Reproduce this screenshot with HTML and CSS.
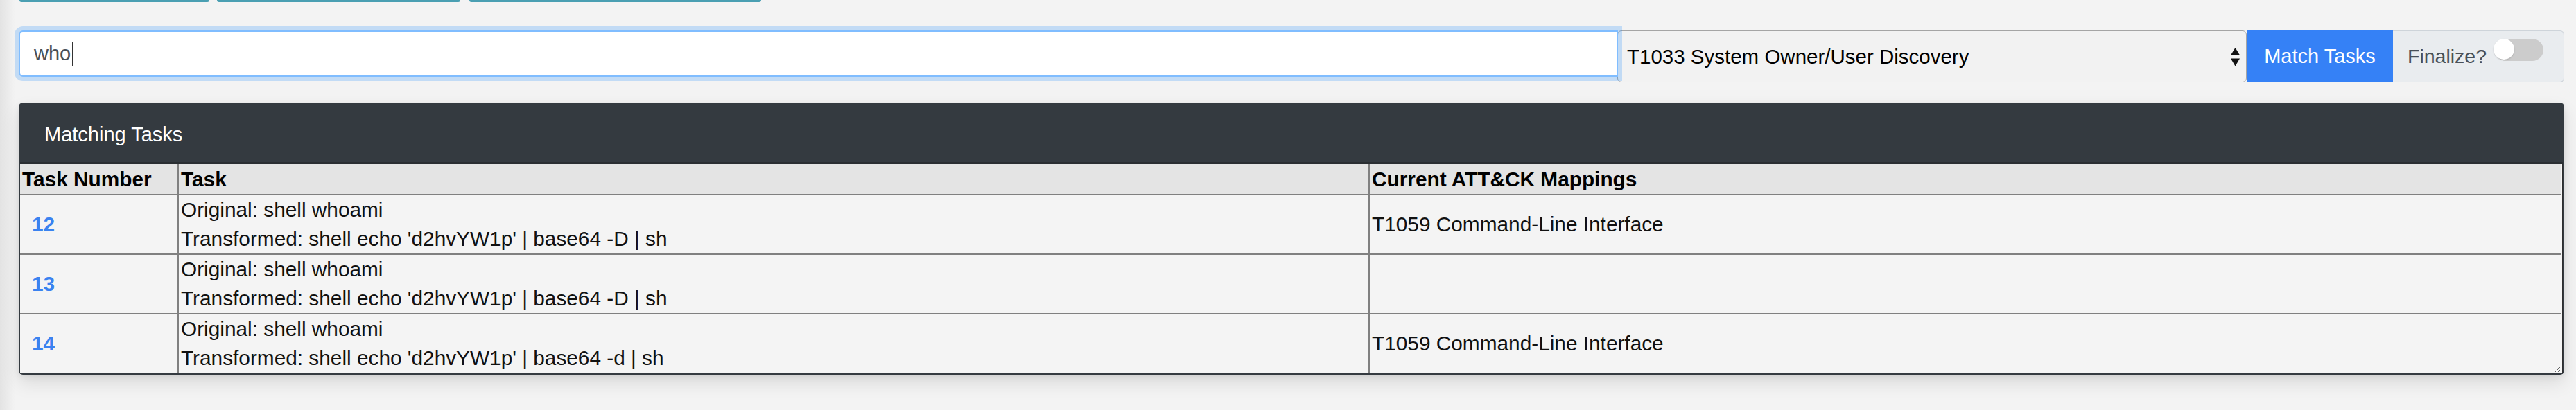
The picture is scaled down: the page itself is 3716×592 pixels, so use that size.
FILE: index.html
```html
<!DOCTYPE html>
<html lang="en">
<head>
<meta charset="utf-8">
<title>Matching Tasks</title>
<link rel="stylesheet" href="styles.css">
</head>
<body>
  <div class="tabs">
    <span class="tab tab-1"></span>
    <span class="tab tab-2"></span>
    <span class="tab tab-3"></span>
  </div>

  <div class="search-row">
    <div class="search-input"><span class="typed">who</span><span class="caret"></span></div>
    <div class="select">
      <span>T1033 System Owner/User Discovery</span>
      <svg class="select-arrows" width="13" height="27" viewBox="0 0 13 27" aria-hidden="true">
        <path d="M0 10.5 L6.5 0 L13 10.5 Z" fill="#111"/>
        <path d="M0 15.5 L13 15.5 L6.5 26.5 Z" fill="#111"/>
      </svg>
    </div>
    <button class="btn-match" type="button">Match Tasks</button>
    <div class="finalize">
      <span class="finalize-label">Finalize?</span>
      <span class="switch"><span class="knob"></span></span>
    </div>
  </div>

  <div class="card">
    <div class="card-header">Matching Tasks</div>
    <div class="table-wrap">
      <table class="tasks">
        <colgroup>
          <col class="col-num">
          <col class="col-task">
          <col>
        </colgroup>
        <thead>
          <tr>
            <th>Task Number</th>
            <th>Task</th>
            <th>Current ATT&amp;CK Mappings</th>
          </tr>
        </thead>
        <tbody>
          <tr>
            <td><a class="task-link" href="#">12</a></td>
            <td>Original: shell whoami<br>Transformed: shell echo 'd2hvYW1p' | base64 -D | sh</td>
            <td>T1059 Command-Line Interface</td>
          </tr>
          <tr>
            <td><a class="task-link" href="#">13</a></td>
            <td>Original: shell whoami<br>Transformed: shell echo 'd2hvYW1p' | base64 -D | sh</td>
            <td></td>
          </tr>
          <tr>
            <td><a class="task-link" href="#">14</a></td>
            <td>Original: shell whoami<br>Transformed: shell echo 'd2hvYW1p' | base64 -d | sh</td>
            <td>T1059 Command-Line Interface</td>
          </tr>
        </tbody>
      </table>
    </div>
  </div>
</body>
</html>
```

FILE: styles.css
```css
* { box-sizing: border-box; }

html, body { margin: 0; }

body {
  min-height: 592px;
  padding: 0 17px 60px 27px;
  background: linear-gradient(to right, #e3e3e3 0, #f3f3f3 22px) #f3f3f3;
  font-family: "Liberation Sans", Arial, Helvetica, sans-serif;
  color: #1a1a1a;
}

/* top button edges */
.tabs {
  display: flex;
  height: 3px;
  margin-left: 1px;
}
.tab {
  display: block;
  height: 3px;
  background: #4a9fb2;
  border-radius: 0 0 5px 5px;
}
.tab-1 { width: 274px; }
.tab-2 { width: 351px; margin-left: 11px; }
.tab-3 { width: 421px; margin-left: 13px; }

/* search row */
.search-row {
  display: flex;
  align-items: flex-start;
  margin-top: 41px;
}

.search-input {
  position: relative;
  z-index: 1;
  flex: none;
  width: 2307px;
  height: 67px;
  display: flex;
  align-items: center;
  padding-left: 20px;
  background: #fff;
  border: 2px solid #80bdff;
  border-radius: 6px 0 0 6px;
  box-shadow: 0 0 0 6px rgba(0, 123, 255, 0.2);
  font-size: 29px;
  color: #495057;
}
.caret {
  display: block;
  width: 2px;
  height: 34px;
  margin-left: 2px;
  background: #333;
}

.select {
  flex: none;
  width: 908px;
  height: 75px;
  margin-left: -1px;
  display: flex;
  align-items: center;
  justify-content: space-between;
  padding: 0 9px 0 13px;
  background: #f2f2f2;
  border: 1.5px solid #a5a5a5;
  border-radius: 6px;
  font-size: 29.5px;
  color: #000;
}
.select-arrows { display: block; margin-top: 2px; }

.btn-match {
  flex: none;
  width: 211px;
  height: 75px;
  padding: 0;
  border: 0;
  background: #3581f6;
  color: #fff;
  font-family: "Liberation Sans", Arial, Helvetica, sans-serif;
  font-size: 29px;
}

.finalize {
  flex: none;
  width: 247px;
  height: 75px;
  display: flex;
  align-items: center;
  padding-left: 21px;
  background: #e9ecef;
  border: 1.5px solid #ced4da;
  border-left: 0;
  border-radius: 0 6px 6px 0;
  font-size: 28.5px;
  color: #495057;
}
.switch {
  position: relative;
  align-self: flex-start;
  flex: none;
  width: 70px;
  height: 32px;
  margin-top: 10.5px;
  margin-left: 12px;
  background: #ccc;
  border-radius: 16px;
}
.knob {
  position: absolute;
  left: -2px;
  top: 0;
  width: 30px;
  height: 30px;
  border-radius: 50%;
  background: #fff;
  box-shadow: 0 1px 2px rgba(0, 0, 0, 0.18);
}

/* card */
.card {
  margin-top: 29px;
  padding: 0 2px 3px 2px;
  background: #343a40;
  border-radius: 6px;
  box-shadow: 0 12px 26px rgba(0, 0, 0, 0.10), 0 3px 8px rgba(0, 0, 0, 0.08);
}
.card-header {
  padding: 25px 35px 19px;
  border-bottom: 3px solid #2a2e32;
  color: #fff;
  font-size: 29px;
  line-height: 42px;
}

.table-wrap {
  background: #f4f4f4;
  border-right: 3px double #2e2e2e;
  resize: both;
  overflow: hidden;
}

.tasks {
  width: 100%;
  border-collapse: separate;
  border-spacing: 0;
  table-layout: fixed;
  font-size: 29.8px;
  color: #111;
}
.col-num { width: 229px; }
.col-task { width: 1718px; }

.tasks th {
  padding: 0 3px;
  background: #e4e4e4;
  border-bottom: 2px solid #808080;
  text-align: left;
  font-weight: bold;
  line-height: 43px;
  color: #000;
  white-space: nowrap;
}
.tasks td {
  padding: 0 3px;
  border-bottom: 2px solid #808080;
  line-height: 42px;
  vertical-align: middle;
  white-space: nowrap;
}
.tasks tbody tr:last-child td { border-bottom: 0; }
.tasks th:nth-child(1), .tasks th:nth-child(2),
.tasks td:nth-child(1), .tasks td:nth-child(2) {
  border-right: 2px solid #808080;
}

.task-link {
  padding-left: 14px;
  color: #3a82f0;
  font-weight: bold;
  text-decoration: none;
}
```
